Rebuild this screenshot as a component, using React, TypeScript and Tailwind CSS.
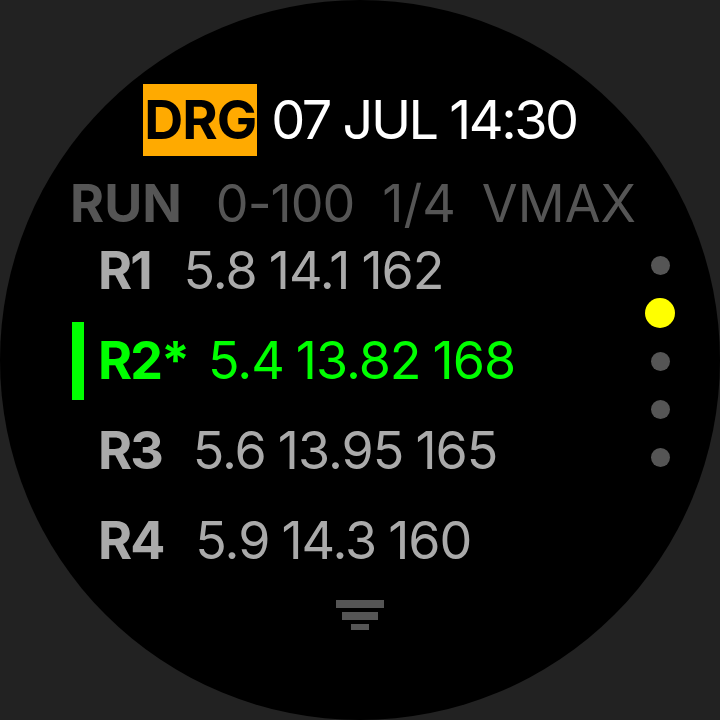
import React from 'react'

type Run = {
  label: string
  values: string[]
  active?: boolean
  gap: string
}

const RUNS: Run[] = [
  { label: 'R1', values: ['5.8', '14.1', '162'], gap: 'ml-[33px]' },
  { label: 'R2*', values: ['5.4', '13.82', '168'], active: true, gap: 'ml-[20px]' },
  { label: 'R3', values: ['5.6', '13.95', '165'], gap: 'ml-[31px]' },
  { label: 'R4', values: ['5.9', '14.3', '160'], gap: 'ml-[32px]' },
]

// scroll position dots on the right edge; index 1 is the current page
const DOTS = [0, 1, 2, 3, 4]

function RunRow({ run }: { run: Run }) {
  const color = run.active ? 'text-[#00ff00]' : 'text-[#aaaaaa]'
  return (
    <div className="relative flex h-[90px] items-center pl-[98px]">
      {run.active && <div className="absolute left-[72px] top-[6px] h-[78px] w-[12px] bg-[#00ff00]" />}
      <span className={`font-bold tracking-[-2px] ${color}`}>{run.label}</span>
      <span className={`${run.gap} flex gap-[12px] tracking-[-1px] ${color}`}>
        {run.values.map((v, i) => (
          <span key={i}>{v}</span>
        ))}
      </span>
    </div>
  )
}

export default function App() {
  return (
    <div className="flex h-[720px] w-[720px] items-center justify-center bg-[#222222]">
      <div
        className="relative h-[720px] w-[720px] overflow-hidden rounded-full bg-black"
        style={{ fontFamily: 'Inter, Roboto, sans-serif' }}
      >
        <div className="flex flex-col pt-[84px]">
          {/* Title */}
          <div className="flex h-[72px] items-center justify-center gap-[14px] text-[54px] leading-none">
            <div className="flex h-[72px] w-[114px] items-center justify-center bg-[#ffaa00] font-bold tracking-[-1px] text-black">
              DRG
            </div>
            <span className="tracking-[-2.5px] text-white">07 JUL 14:30</span>
          </div>

          {/* Column headings */}
          <div className="mt-[26px] flex h-[44px] items-center pl-[70px] text-[52px] leading-none text-[#555555]">
            <span className="font-bold">RUN</span>
            <span className="ml-[34px] tracking-[-1px]">0-100</span>
            <span className="ml-[28px]">1/4</span>
            <span className="ml-[26px]">VMAX</span>
          </div>

          {/* Runs */}
          <div className="flex flex-col text-[52px] leading-none">
            {RUNS.map((r) => (
              <RunRow key={r.label} run={r} />
            ))}
          </div>

          {/* More indicator */}
          <div className="mt-[14px] flex flex-col items-center gap-[4px]">
            <div className="h-[8px] w-[48px] bg-[#555555]" />
            <div className="h-[8px] w-[36px] bg-[#555555]" />
            <div className="h-[6px] w-[18px] bg-[#555555]" />
          </div>
        </div>

        {/* Scroll indicator */}
        <div className="absolute right-[44px] top-[241px] flex w-[32px] flex-col items-center">
          {DOTS.map((d) => (
            <div key={d} className="flex h-[48px] items-center justify-center">
              {d === 1 ? (
                <div className="h-[30px] w-[30px] rounded-full bg-[#ffff00]" />
              ) : (
                <div className="h-[19px] w-[19px] rounded-full bg-[#555555]" />
              )}
            </div>
          ))}
        </div>
      </div>
    </div>
  )
}
